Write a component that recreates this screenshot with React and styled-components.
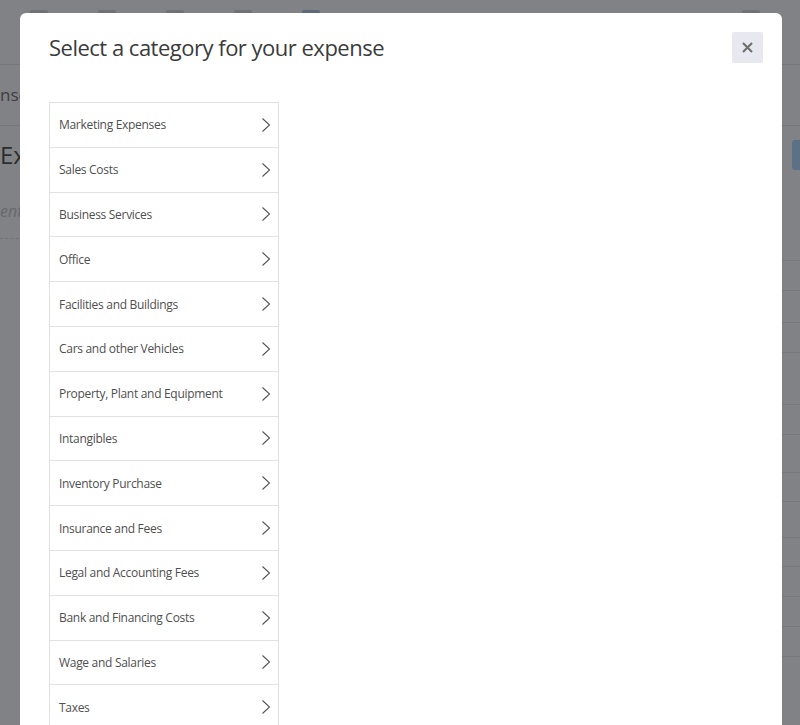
import React from "react";
import styled, { createGlobalStyle } from "styled-components";

const GlobalStyle = createGlobalStyle`
  html, body { margin: 0; padding: 0; height: 100%; overflow: hidden; background: #ffffff; }
  body { font-family: "Open Sans", "Liberation Sans", sans-serif; }
  #root { height: 100%; }
`;

const Page = styled.div`
  position: relative;
  height: 725px;
  overflow: hidden;
  background: #ffffff;
`;

const TopBar = styled.div`
  height: 64px;
  border-bottom: 1px solid #e6e6e6;
  display: flex;
  justify-content: space-between;
  align-items: flex-start;
  padding: 0 40px 0 30px;
`;

const ToolGroup = styled.div`
  display: flex;
  gap: 50px;
  padding-top: 10px;
`;

const ToolIcon = styled.span`
  width: 18px;
  height: 4px;
  background: ${(p) => (p.$accent ? "#b8cde8" : "#dcdcdc")};
  border-radius: 2px;
`;

const PageSection = styled.div`
  border-bottom: 1px solid #e6e6e6;
  padding: 18px 0 18px 0;
`;

const Crumb = styled.div`
  font-size: 17px;
  color: #777;
  line-height: 24px;
`;

const Content = styled.div`
  display: flex;
  justify-content: space-between;
  padding-top: 14px;
`;

const ContentLeft = styled.div`
  display: flex;
  flex-direction: column;
  gap: 30px;
`;

const BigTitle = styled.div`
  font-size: 24px;
  color: #555;
  line-height: 30px;
`;

const Placeholder = styled.div`
  font-size: 16px;
  font-style: italic;
  color: #ccc;
  padding-bottom: 16px;
  border-bottom: 1px dashed #ddd;
  width: 60px;
`;

const BlueButton = styled.div`
  width: 30px;
  height: 30px;
  margin-right: -22px;
  border-radius: 3px;
  background: #b4dcff;
`;

const TableLines = styled.div`
  display: flex;
  flex-direction: column;
  margin-left: 300px;
`;

const TableLine = styled.div`
  height: ${(p) => p.$h}px;
  box-sizing: border-box;
  border-bottom: 1px solid #ececec;
`;

const Overlay = styled.div`
  position: absolute;
  inset: 0;
  background: rgba(3, 5, 12, 0.5);
`;

const Modal = styled.div`
  position: absolute;
  top: 13px;
  left: 20px;
  right: 18px;
  bottom: -20px;
  background: #ffffff;
  border-radius: 6px;
  padding: 19px 19px 0 29px;
  box-sizing: border-box;
`;

const ModalHeader = styled.div`
  display: flex;
  justify-content: space-between;
  align-items: flex-start;
`;

const Title = styled.h2`
  margin: 0;
  font-family: "Open Sans", sans-serif;
  font-weight: 400;
  font-size: 22px;
  letter-spacing: -0.5px;
  line-height: 31px;
  color: #3b3b3b;
`;

const CloseButton = styled.button`
  width: 31px;
  height: 31px;
  border: none;
  border-radius: 2px;
  background: #e8e8f0;
  padding: 0;
  display: flex;
  align-items: center;
  justify-content: center;
  cursor: pointer;
`;

const CategoryList = styled.ul`
  list-style: none;
  margin: 39px 0 0 0;
  padding: 0;
  width: 230px;
  border: 1px solid #e2e2e2;
  border-bottom: none;
  box-sizing: border-box;
`;

const CategoryItem = styled.li`
  height: 44.8px;
  box-sizing: border-box;
  border-bottom: 1px solid #e2e2e2;
  display: flex;
  align-items: center;
  justify-content: space-between;
  padding: 0 7px 0 9px;
  font-size: 12px;
  letter-spacing: -0.3px;
  color: #4f4f4f;
`;

const Chevron = () => (
  <svg width="10" height="16" viewBox="0 0 10 16" fill="none">
    <path d="M1.5 1.5 L8.5 8 L1.5 14.5" stroke="#555" strokeWidth="1.1" />
  </svg>
);

const CloseIcon = () => (
  <svg width="11" height="11" viewBox="0 0 11 11">
    <path d="M1 1 L10 10 M10 1 L1 10" stroke="#6e6e6e" strokeWidth="2.1" />
  </svg>
);

const categories = [
  "Marketing Expenses",
  "Sales Costs",
  "Business Services",
  "Office",
  "Facilities and Buildings",
  "Cars and other Vehicles",
  "Property, Plant and Equipment",
  "Intangibles",
  "Inventory Purchase",
  "Insurance and Fees",
  "Legal and Accounting Fees",
  "Bank and Financing Costs",
  "Wage and Salaries",
  "Taxes",
];

const lineHeights = [22, 30, 32, 30, 52, 30, 38, 29, 36, 29, 30, 30, 30];

export default function App() {
  return (
    <>
      <GlobalStyle />
      <Page>
        <TopBar>
          <ToolGroup>
            <ToolIcon />
            <ToolIcon />
            <ToolIcon />
            <ToolIcon />
            <ToolIcon $accent />
          </ToolGroup>
          <ToolGroup>
            <ToolIcon />
          </ToolGroup>
        </TopBar>
        <PageSection>
          <Crumb>nse</Crumb>
        </PageSection>
        <Content>
          <ContentLeft>
            <BigTitle>Exp</BigTitle>
            <Placeholder>ent</Placeholder>
          </ContentLeft>
          <BlueButton />
        </Content>
        <TableLines>
          {lineHeights.map((h, i) => (
            <TableLine key={i} $h={h} />
          ))}
        </TableLines>
        <Overlay />
        <Modal>
          <ModalHeader>
            <Title>Select a category for your expense</Title>
            <CloseButton aria-label="Close">
              <CloseIcon />
            </CloseButton>
          </ModalHeader>
          <CategoryList>
            {categories.map((c) => (
              <CategoryItem key={c}>
                <span>{c}</span>
                <Chevron />
              </CategoryItem>
            ))}
          </CategoryList>
        </Modal>
      </Page>
    </>
  );
}
